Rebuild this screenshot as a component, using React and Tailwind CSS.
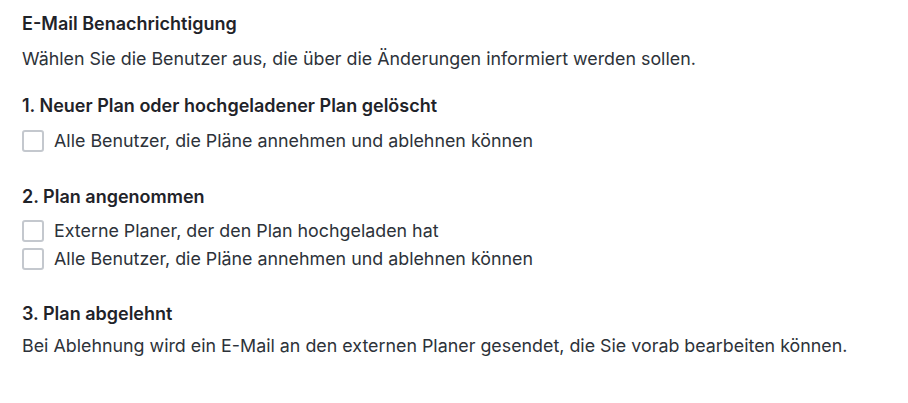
const Checkbox = ({ label }) => (
  <label className="flex items-center gap-[10px] h-6">
    <span className="w-[22px] h-[22px] rounded-[3px] border-2 border-[#c4c8ce] bg-white shrink-0" />
    <span>{label}</span>
  </label>
)

const Heading = ({ children, className = '' }) => (
  <h3 className={`font-semibold text-[#1f2329] text-[18px] leading-6 ${className}`}>{children}</h3>
)

export default function App() {
  return (
    <div
      className="bg-white min-h-screen px-[22px] pt-[12px] text-[#2d3239] text-[17.85px] leading-6"
      style={{ fontFamily: 'Inter, "Noto Sans", sans-serif' }}
    >
      <Heading>E-Mail Benachrichtigung</Heading>
      <p className="mt-[11px]">Wählen Sie die Benutzer aus, die über die Änderungen informiert werden sollen.</p>

      <Heading className="mt-[23px]">1. Neuer Plan oder hochgeladener Plan gelöscht</Heading>
      <div className="mt-[11px] flex flex-col gap-1">
        <Checkbox label="Alle Benutzer, die Pläne annehmen und ablehnen können" />
      </div>

      <Heading className="mt-[32px]">2. Plan angenommen</Heading>
      <div className="mt-[10px] flex flex-col gap-1">
        <Checkbox label="Externe Planer, der den Plan hochgeladen hat" />
        <Checkbox label="Alle Benutzer, die Pläne annehmen und ablehnen können" />
      </div>

      <Heading className="mt-[31px]">3. Plan abgelehnt</Heading>
      <p className="mt-[8px]">Bei Ablehnung wird ein E-Mail an den externen Planer gesendet, die Sie vorab bearbeiten können.</p>
    </div>
  )
}
